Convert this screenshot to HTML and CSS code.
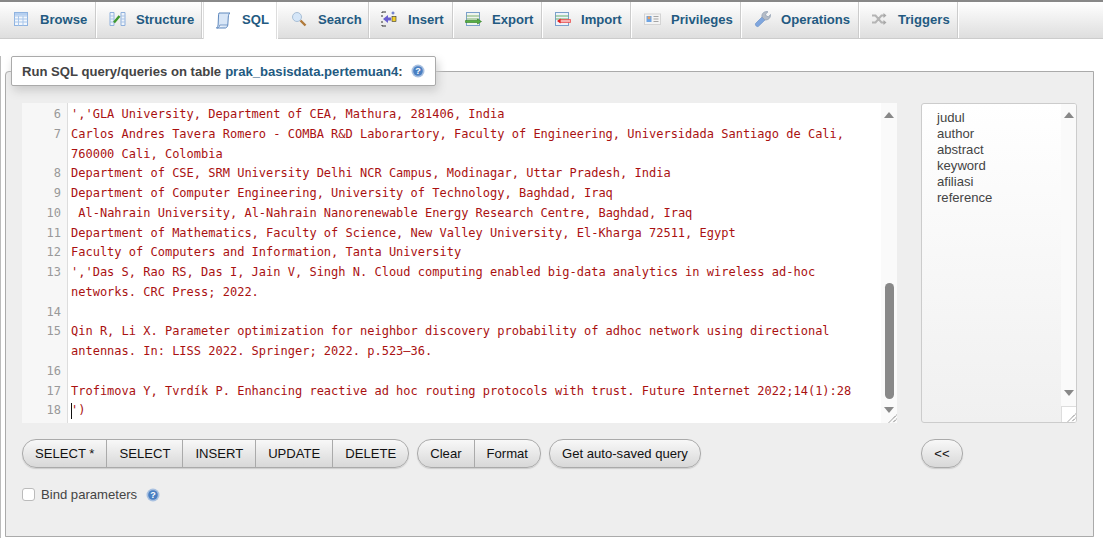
FILE: index.html
```html
<!DOCTYPE html>
<html lang="en">
<head>
<meta charset="utf-8">
<title>SQL</title>
<link rel="stylesheet" href="styles.css">
</head>
<body>
<nav class="tabs">
  <a class="tab t-browse"><svg class="ico" viewBox="0 0 16 16"><rect x="1.500" y="1.500" width="13" height="13" fill="#f2f7fd" stroke="#8fb3e0"/><path d="M1.500 5h13M1.500 8h13M1.500 11h13M5.500 5v9.500M10 5v9.500" stroke="#a9c6ea"/><rect x="2" y="2" width="12" height="2.500" fill="#b5cff0"/></svg>Browse</a>
  <a class="tab t-struct"><svg class="ico wide" viewBox="0 0 17 16"><path d="M1 1.500h4v13H1zM12 1.500h4v13h-4z" fill="#eef4fb" stroke="#8fb0dc"/><path d="M1 5h4M1 8h4M1 11h4M12 5h4M12 8h4M12 11h4" stroke="#a9c3e6"/><path d="M5 11.500 10.500 5" stroke="#3f9a2e" stroke-width="2.400"/></svg>Structure</a>
  <a class="tab active t-sql"><svg class="ico big" viewBox="0 0 17 18"><path d="M4 2h11c-1.300 1-1.500 2-1.700 4L12.800 14c-.2 1.500-1 2.500-2.300 3H1.500c1-.7 1.500-1.700 1.600-3L3.500 5C3.600 3.700 3.600 2.700 4 2z" fill="#d8e6f7" stroke="#5f88bd"/><path d="M1.500 17c1.500.2 3-.6 3.300-3h8" fill="#f1f6fc" stroke="#5f88bd" stroke-width=".8"/></svg>SQL</a>
  <a class="tab t-search"><svg class="ico" viewBox="0 0 16 16"><circle cx="6" cy="6" r="4.500" fill="#d5e6f8" stroke="#a9bfd6"/><path d="M9.500 9.500 14.500 14.500" stroke="#b07a3a" stroke-width="2.400"/></svg>Search</a>
  <a class="tab t-insert"><svg class="ico" viewBox="0 0 16 16"><path d="M5 1H1v1M1 14v1h4M1 4v2M1 10v2" stroke="#333" fill="none"/><path d="M2 8l5-4v2.500h3v3H7V12z" fill="#6a5fd0"/><rect x="11" y="5.500" width="4" height="5" fill="#f2cf2b" stroke="#333" stroke-width=".6"/><path d="M12 .5v3M10.500 2h3" stroke="#4a5fc0"/></svg>Insert</a>
  <a class="tab t-export"><svg class="ico wide" viewBox="0 0 17 16"><rect x="1.500" y="1.500" width="13" height="13" fill="#eef4ee" stroke="#7ba0cc"/><path d="M1.500 5h13M1.500 8h13" stroke="#7cb070"/><path d="M.5 9.500h12v-1.500l4 2.500-4 2.500v-1.500H.5z" fill="#57b043" stroke="#2e7a20" stroke-width=".6"/></svg>Export</a>
  <a class="tab t-import"><svg class="ico wide" viewBox="0 0 17 16"><rect x="1.500" y="1.500" width="13" height="13" fill="#eef3fa" stroke="#7ba0cc"/><path d="M1.500 5h13M1.500 8h13" stroke="#66b06a"/><path d="M6 8.500h10.500v3H6z" fill="#f7b0b0" stroke="#e84040" stroke-width=".7"/><path d="M3 10l3.500-2.500v5z" fill="#e02020"/></svg>Import</a>
  <a class="tab t-priv"><svg class="ico wide" viewBox="0 0 17 16"><rect x=".5" y="3" width="16" height="10.500" fill="#f4f4f4" stroke="#d4d4d4"/><rect x="2.500" y="5" width="5" height="6" fill="#6da3e2"/><circle cx="5" cy="6.800" r="1.500" fill="#e8a060"/><path d="M9.500 5.500h5M9.500 8h5M9.500 10.500h5" stroke="#a5a5a5"/></svg>Privileges</a>
  <a class="tab t-ops"><svg class="ico big" viewBox="0 0 17 17"><path d="M1.500 13 8 6.500l3 3L4.200 16c-1 .6-3.500-1-2.700-3z" fill="#7fa6de" stroke="#6f93c8" stroke-width=".7"/><path d="M8 6.500c-.6-2.500 1-5.500 5-5.500l1 .3-2.500 2.400 1 2 2 .6L16.500 4c.4 3-2 5.700-5.500 5.500z" fill="#b5bcc6" stroke="#8d9cb0" stroke-width=".7"/></svg>Operations</a>
  <a class="tab t-trig"><svg class="ico" viewBox="0 0 16 16"><path d="M1 4.500h3.500l6 7H13M1 11.500h3.500l6-7H13" fill="none" stroke="#b4b4b4" stroke-width="2"/><path d="M12.500 2l3 2.500-3 2.500zM12.500 9l3 2.500-3 2.500z" fill="#a8a8a8"/></svg>Triggers</a>
</nav>

<main class="page">
<fieldset class="panel">
  <legend class="legend">Run SQL query/queries on table <a class="table-link">prak_basisdata.pertemuan4</a>: <svg class="help" viewBox="0 0 14 14"><circle cx="7" cy="7" r="6.500" fill="#a8c0e0"/><circle cx="7" cy="7" r="4.800" fill="#4a7fc2"/><text x="7" y="10" class="help-mark">?</text></svg></legend>

  <div class="query-row">
    <div class="editor-col">
      <div class="editor">
        <div class="code">
          <div class="line"><span class="num">6</span><span class="txt">','GLA University, Department of CEA, Mathura, 281406, India</span></div>
          <div class="line"><span class="num">7</span><span class="txt">Carlos Andres Tavera Romero - COMBA R&amp;D Laborartory, Faculty of Engineering, Universidada Santiago de Cali, 760000 Cali, Colombia</span></div>
          <div class="line"><span class="num">8</span><span class="txt">Department of CSE, SRM University Delhi NCR Campus, Modinagar, Uttar Pradesh, India</span></div>
          <div class="line"><span class="num">9</span><span class="txt">Department of Computer Engineering, University of Technology, Baghdad, Iraq</span></div>
          <div class="line"><span class="num">10</span><span class="txt"> Al-Nahrain University, Al-Nahrain Nanorenewable Energy Research Centre, Baghdad, Iraq</span></div>
          <div class="line"><span class="num">11</span><span class="txt">Department of Mathematics, Faculty of Science, New Valley University, El-Kharga 72511, Egypt</span></div>
          <div class="line"><span class="num">12</span><span class="txt">Faculty of Computers and Information, Tanta University</span></div>
          <div class="line"><span class="num">13</span><span class="txt">','Das S, Rao RS, Das I, Jain V, Singh N. Cloud computing enabled big-data analytics in wireless ad-hoc networks. CRC Press; 2022.</span></div>
          <div class="line"><span class="num">14</span><span class="txt"> </span></div>
          <div class="line"><span class="num">15</span><span class="txt">Qin R, Li X. Parameter optimization for neighbor discovery probability of adhoc network using directional antennas. In: LISS 2022. Springer; 2022. p.523–36.</span></div>
          <div class="line"><span class="num">16</span><span class="txt"> </span></div>
          <div class="line"><span class="num">17</span><span class="txt">Trofimova Y, Tvrdík P. Enhancing reactive ad hoc routing protocols with trust. Future Internet 2022;14(1):28</span></div>
          <div class="line"><span class="num">18</span><span class="txt"><span class="caret"></span>')</span></div>
        </div>
        <div class="sbar">
          <span class="arrow up"></span>
          <span class="track"><span class="thumb"></span></span>
          <span class="arrow down"></span>
          <svg class="grip" viewBox="0 0 9 9"><path d="M8.500 1 1 8.500M8.500 5 5 8.500" stroke="#555" stroke-dasharray="1 .6" fill="none"/></svg>
        </div>
      </div>
      <div class="btn-row">
        <div class="group">
          <button class="btn">SELECT *</button><button class="btn">SELECT</button><button class="btn">INSERT</button><button class="btn">UPDATE</button><button class="btn">DELETE</button>
        </div>
        <div class="group">
          <button class="btn">Clear</button><button class="btn">Format</button>
        </div>
        <div class="group">
          <button class="btn">Get auto-saved query</button>
        </div>
      </div>
      <label class="bind"><span class="check"></span>Bind parameters <svg class="help" viewBox="0 0 14 14"><circle cx="7" cy="7" r="6.500" fill="#a8c0e0"/><circle cx="7" cy="7" r="4.800" fill="#4a7fc2"/><text x="7" y="10" class="help-mark">?</text></svg></label>
    </div>
    <div class="side-col">
      <div class="fields">
        <ul class="field-list">
          <li>judul</li><li>author</li><li>abstract</li><li>keyword</li><li>afiliasi</li><li>reference</li>
        </ul>
        <div class="side-sbar">
          <span class="arrow up"></span>
          <span class="track"></span>
          <span class="arrow down"></span>
          <span class="grip-box"><svg class="grip" viewBox="0 0 9 9"><path d="M8.500 1 1 8.500M8.500 5 5 8.500" stroke="#555" stroke-dasharray="1 .6" fill="none"/></svg></span>
        </div>
      </div>
      <div class="group side-btn"><button class="btn">&lt;&lt;</button></div>
    </div>
  </div>
</fieldset>
</main>
</body>
</html>
```
FILE: styles.css
```css
* { box-sizing: border-box; }
html, body { margin: 0; height: 538px; overflow: hidden; background: #fff; }
body { font-family: "Liberation Sans", Arial, sans-serif; font-size: 12px; color: #444; }

.tabs { display: flex; height: 39px; border-top: 2px solid #888; border-bottom: 1px solid #ccc; background: linear-gradient(#fff, #dedede); }
.tab { display: flex; align-items: center; height: 36px; font-size: 13.1px; font-weight: bold; color: #235a81; background: linear-gradient(#fff, #dedede); border-right: 1px solid #fff; box-shadow: inset -1px 0 0 #ccc; white-space: nowrap; padding-bottom: 2px; }
.tab.active { background: #fff; height: 37px; margin-bottom: -1px; box-shadow: inset -1px 0 0 #ddd, inset 1px 0 0 #ddd; }
.ico { width: 16px; height: 16px; margin-right: 11px; flex: none; }
.ico.wide { width: 17px; margin-right: 10px; }
.ico.big { width: 17px; height: 18px; margin-right: 10px; }
.t-browse { width: 97px; padding-left: 13px; }
.t-struct { width: 106px; padding-left: 12px; }
.t-sql { width: 75px; padding-left: 12px; }
.t-search { width: 92px; padding-left: 13px; }
.t-insert { width: 84px; padding-left: 11px; }
.t-export { width: 89px; padding-left: 11px; }
.t-import { width: 89px; padding-left: 11px; }
.t-priv { width: 110px; padding-left: 12px; }
.t-ops { width: 118px; padding-left: 12px; }
.t-trig { width: 99px; padding-left: 11px; }

.page { height: 499px; border-left: 1px solid #bbb; }
.panel { margin: 17px 9px 0 4px; padding: 0 16px; height: 481px; background: #eee; border: 1px solid #aaa; border-radius: 4px 0 0 0; min-width: 0; }
.legend { margin-left: -11px; height: 30px; padding: 0 10px; display: flex; align-items: center; background: #fff; border: 1px solid #aaa; border-radius: 2px; box-shadow: 2px 5px 10px #ccc; font-size: 13.1px; font-weight: bold; color: #444; }
.table-link { color: #235a81; margin-left: 4px; }
.help { width: 14px; height: 14px; flex: none; margin-left: 8px; }
.help-mark { font-family: "Liberation Sans", sans-serif; font-size: 9px; font-weight: bold; fill: #fff; text-anchor: middle; }

.query-row { display: flex; gap: 24px; margin-top: 17px; }
.editor-col { width: 875px; flex: none; }
.editor { display: flex; height: 320px; background: #fff; overflow: hidden; }
.code { width: 859px; flex: none; padding-top: 2px; font-family: "DejaVu Sans Mono", monospace; font-size: 12px; line-height: 19.77px; color: #a11; background: linear-gradient(to right, #f7f7f7 45px, #ddd 45px, #ddd 46px, #fff 46px); }
.line { display: flex; }
.num { width: 39px; flex: none; text-align: right; color: #999; }
.txt { margin-left: 10px; width: 808px; white-space: pre-wrap; position: relative; }
.caret { position: absolute; left: 0; top: 2px; width: 1px; height: 16px; background: #111; }

.sbar { width: 16px; flex: none; display: flex; flex-direction: column; align-items: center; background: #fafafa; }
.arrow { flex: none; width: 0; height: 0; border-left: 5px solid transparent; border-right: 5px solid transparent; }
.arrow.up { margin-top: 9px; border-bottom: 6px solid #888; }
.arrow.down { margin-top: 3px; border-top: 6px solid #888; }
.track { flex: 1; width: 100%; display: flex; flex-direction: column; justify-content: flex-end; align-items: center; }
.thumb { display: block; width: 9px; height: 116px; background: #888; border-radius: 5px; margin-bottom: 5px; }
.grip { display: block; width: 9px; height: 9px; flex: none; margin: 1px 0 0 auto; }

.btn-row { display: flex; gap: 8px; margin-top: 16px; }
.group { display: flex; height: 29px; border: 1px solid #aaa; border-radius: 14px; overflow: hidden; background: linear-gradient(#f8f8f8, #d8d8d8); box-shadow: 0 1px 1px #ccc; }
.btn { font: 13.1px "Liberation Sans", Arial, sans-serif; color: #111; background: none; border: 0; border-left: 1px solid #aaa; padding: 0 12px; height: 100%; white-space: nowrap; }
.btn:first-child { border-left: 0; }
.bind { display: flex; align-items: center; margin-top: 14px; height: 24px; font-size: 13.1px; color: #444; }
.check { width: 13px; height: 13px; flex: none; margin: 1px 6px 0 0; background: #fff; border: 1px solid #bbb; border-radius: 3px; }
.bind .help { margin: 2px 0 0 9px; }

.side-col { width: 156px; flex: none; }
.fields { display: flex; height: 320px; border: 1px solid #ccc; border-radius: 3px; background: linear-gradient(#fff, #f0f0f0); overflow: hidden; }
.field-list { flex: 1; margin: 0; padding: 6px 0 0 15px; list-style: none; font-size: 13.1px; line-height: 16px; color: #444; }
.side-sbar { width: 15px; flex: none; display: flex; flex-direction: column; align-items: center; background: #fafafa; }
.side-sbar .arrow.up { margin-top: 8px; }
.grip-box { display: flex; align-items: flex-end; width: 100%; height: 16px; margin-top: 10px; flex: none; border: 1px solid #ddd; border-width: 1px 0 0 1px; background: #fff; }
.side-btn { width: 42px; margin-top: 16px; justify-content: center; }
.side-btn .btn { padding: 0; width: 100%; }
```
